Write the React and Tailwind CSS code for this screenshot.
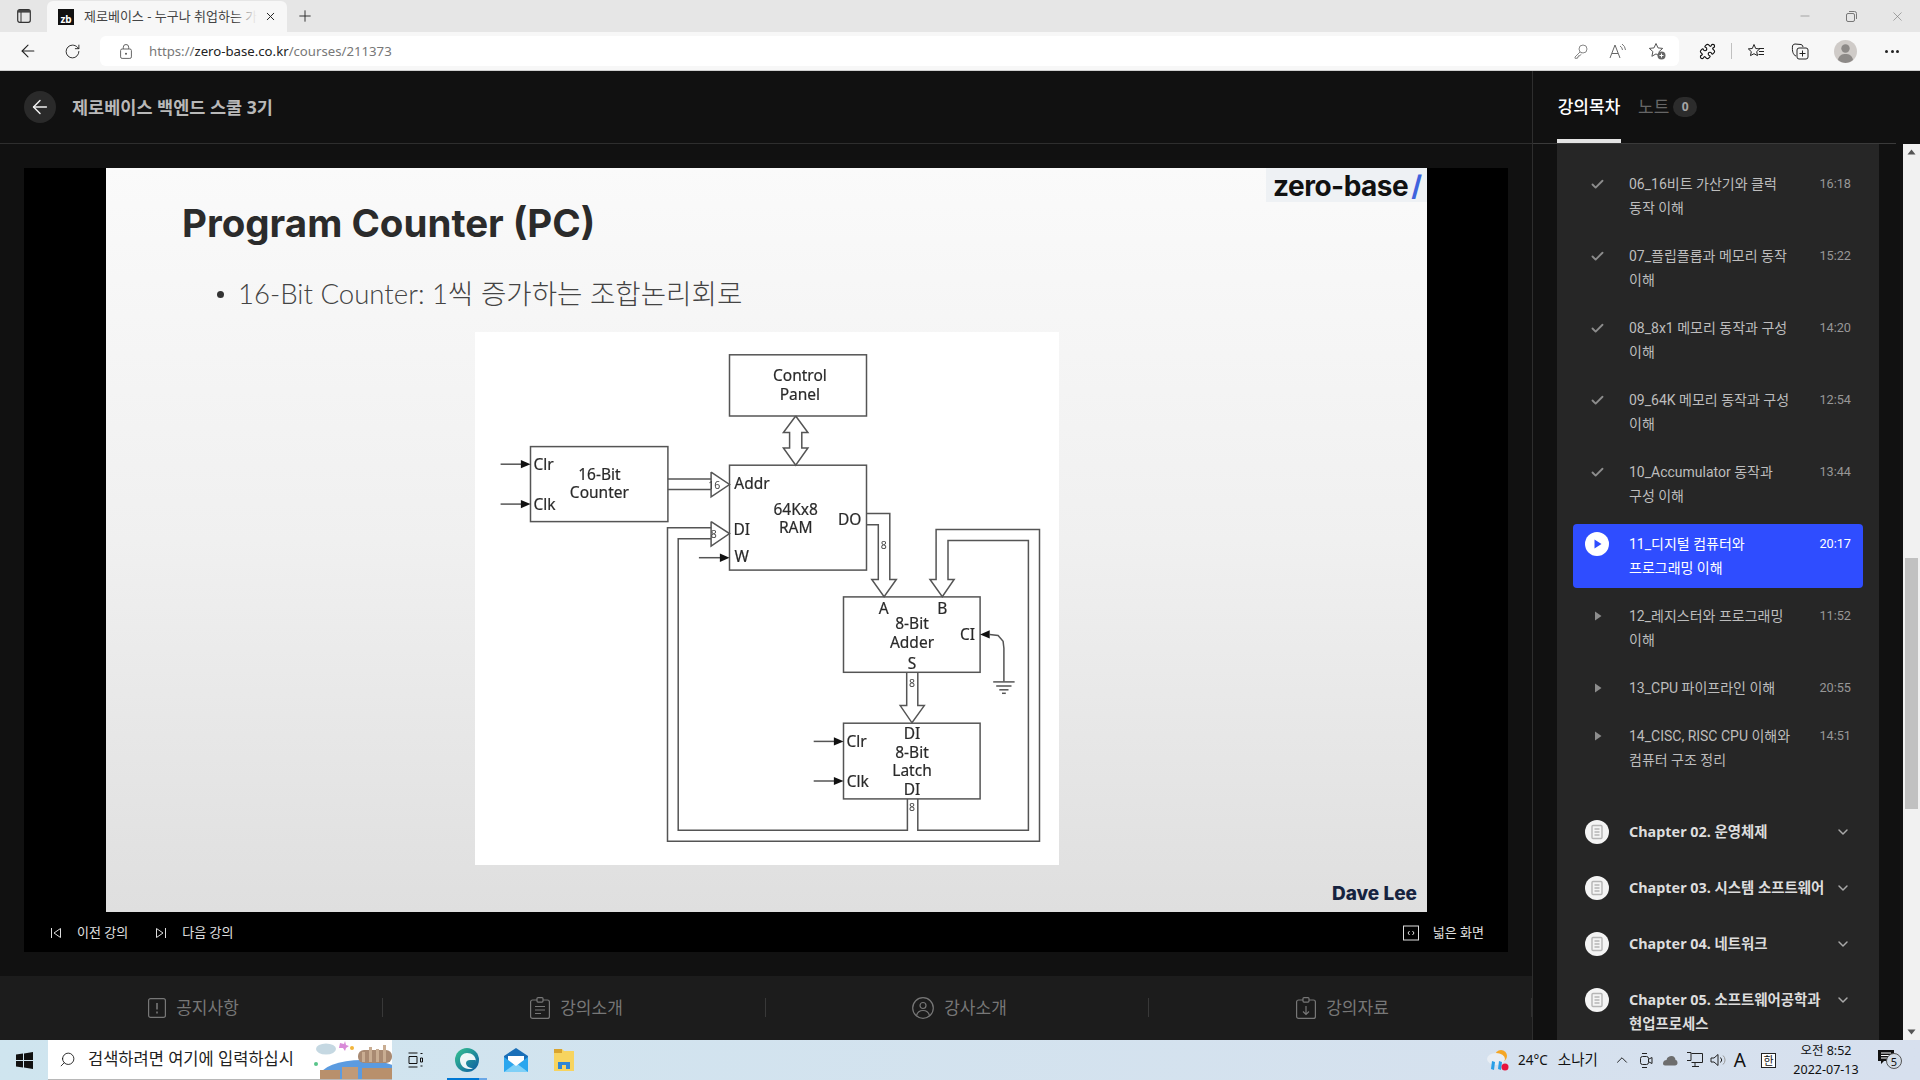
import React from "react";
import { ArrowLeft, RotateCw, Plus, X, Minus, Search, Check, ChevronDown, ChevronUp, Puzzle } from "lucide-react";

const FONT = { fontFamily: '"Noto Sans","Noto Sans CJK KR",sans-serif' };
const LIST_FONT = { fontFamily: 'Roboto,"Noto Sans CJK KR",sans-serif' };
const X_ = (x) => +(x * 0.3827 - 5).toFixed(1);
const Y_ = (y) => +(y * 0.344 - 2).toFixed(1);
const P = (pts) => pts.map(([x, y]) => `${X_(x)},${Y_(y)}`).join(" ");

const lessons = [
  ["06_16비트 가산기와 클럭", "동작 이해", "16:18", "done"],
  ["07_플립플롭과 메모리 동작", "이해", "15:22", "done"],
  ["08_8x1 메모리 동작과 구성", "이해", "14:20", "done"],
  ["09_64K 메모리 동작과 구성", "이해", "12:54", "done"],
  ["10_Accumulator 동작과", "구성 이해", "13:44", "done"],
  ["11_디지털 컴퓨터와", "프로그래밍 이해", "20:17", "active"],
  ["12_레지스터와 프로그래밍", "이해", "11:52", "todo"],
  ["13_CPU 파이프라인 이해", null, "20:55", "todo"],
  ["14_CISC, RISC CPU 이해와", "컴퓨터 구조 정리", "14:51", "todo"],
];
const chapters = [
  ["Chapter 02. 운영체제"],
  ["Chapter 03. 시스템 소프트웨어"],
  ["Chapter 04. 네트워크"],
  ["Chapter 05. 소프트웨어공학과", "현업프로세스"],
];

function Diagram() {
  const rects = [[678, 72, 1036, 250], [158, 339, 517, 557], [678, 393, 1036, 698], [976, 776, 1333, 995], [976, 1143, 1333, 1363]];
  const lines = [
    [[851, 250], [883, 298], [867, 298], [867, 343], [883, 343], [851, 393], [819, 343], [835, 343], [835, 298], [819, 298], [851, 250]],
    [[517, 433], [630, 433]],
    [[517, 464], [630, 464]],
    [[630, 413], [678, 449], [630, 485], [630, 413]],
    [[630, 557], [678, 592], [630, 628], [630, 557]],
    [[630, 575], [516, 575], [516, 1486], [1488, 1486], [1488, 580], [1218, 580], [1218, 725], [1202, 725], [1234, 775], [1265, 725], [1249, 725], [1249, 612], [1459, 612], [1459, 1454], [1170, 1454], [1170, 1363]],
    [[1143, 1363], [1143, 1454], [544, 1454], [544, 607], [630, 607]],
    [[1036, 533], [1097, 533], [1097, 725], [1114, 725], [1082, 775], [1050, 725], [1067, 725], [1067, 566], [1036, 566]],
    [[1141, 995], [1141, 1092], [1124, 1092], [1155, 1142], [1187, 1092], [1170, 1092], [1170, 995]],
    [[80, 390], [135, 390]],
    [[80, 506], [135, 506]],
    [[598, 662], [655, 662]],
    [[898, 1196], [955, 1196]],
    [[898, 1311], [955, 1311]],
    [[1367, 1023], [1423, 1023]],
    [[1375, 1035], [1415, 1035]],
    [[1383, 1046], [1407, 1046]],
    [[1390, 1056], [1400, 1056]],
    [[1358, 885], [1380, 888], [1393, 905], [1395, 925], [1395, 1022]],
  ];
  const heads = [
    [[133, 378], [158, 390], [133, 402]],
    [[133, 494], [158, 506], [133, 518]],
    [[653, 650], [678, 662], [653, 674]],
    [[951, 1184], [976, 1196], [951, 1208]],
    [[951, 1299], [976, 1311], [951, 1323]],
    [[1358, 873], [1333, 885], [1358, 897]],
  ];
  const big = [
    ["Control", 862, 132], ["Panel", 862, 186], ["16-Bit", 338, 418], ["Counter", 338, 472], ["Clr", 192, 390], ["Clk", 195, 506],
    ["Addr", 737, 445], ["64Kx8", 851, 519], ["RAM", 851, 573], ["DI", 710, 577], ["W", 710, 656], ["DO", 992, 549],
    ["A", 1081, 808], ["B", 1234, 808], ["8-Bit", 1155, 852], ["Adder", 1155, 906], ["S", 1155, 968], ["CI", 1300, 885],
    ["DI", 1155, 1172], ["8-Bit", 1155, 1226], ["Latch", 1155, 1280], ["DI", 1155, 1334], ["Clr", 1010, 1196], ["Clk", 1013, 1311],
  ];
  const small = [["16", 638, 449], ["8", 637, 592], ["8", 1081, 625], ["8", 1155, 1027], ["8", 1155, 1387]];
  return (
    <svg width="584" height="533" viewBox="0 0 584 533" className="block blur-[0.35px]" style={FONT}>
      <rect width="584" height="533" fill="#ffffff" />
      {rects.map(([a, b, c, d], i) => (
        <rect key={i} x={X_(a)} y={Y_(b)} width={X_(c) - X_(a)} height={Y_(d) - Y_(b)} fill="none" stroke="#555" strokeWidth="1.5" />
      ))}
      {lines.map((l, i) => (
        <polyline key={i} points={P(l)} fill="none" stroke="#555" strokeWidth="1.5" />
      ))}
      {heads.map((l, i) => (
        <polygon key={i} points={P(l)} fill="#111" />
      ))}
      {big.map(([t, x, y], i) => (
        <text key={i} x={X_(x)} y={Y_(y)} fontSize="15.5" fill="#2a2a2a" stroke="#2a2a2a" strokeWidth="0.2" textAnchor="middle" dominantBaseline="central">{t}</text>
      ))}
      {small.map(([t, x, y], i) => (
        <text key={i} x={X_(x)} y={Y_(y)} fontSize="10.5" fill="#444" textAnchor="middle" dominantBaseline="central">{t}</text>
      ))}
    </svg>
  );
}

function DocCircle() {
  return (
    <svg width="24" height="24" viewBox="0 0 24 24" className="shrink-0">
      <circle cx="12" cy="12" r="12" fill="#f4f4f4" />
      <rect x="7" y="5.500" width="10" height="13" rx="1" fill="none" stroke="#b5b5b5" strokeWidth="1.4" />
      <path d="M9.500 9h5M9.500 12h5M9.500 15h5" stroke="#b5b5b5" strokeWidth="1.3" />
    </svg>
  );
}

function LessonRow({ l1, l2, time, state }) {
  const active = state === "active";
  return (
    <div className={`mx-4 mb-2 flex w-[290px] rounded py-2 pl-3 pr-3 text-[14px] leading-6 ${active ? "bg-[#2f4dff] text-white" : "text-[#bdbdbd]"}`} style={LIST_FONT}>
      <div className="flex h-6 w-6 shrink-0 items-center justify-center">
        {state === "done" && <Check size={15} strokeWidth={3} color="#8c8c8c" />}
        {state === "todo" && (
          <svg width="8" height="10" viewBox="0 0 8 10" className="ml-[1px]"><path d="M1 0.500 L7.500 5 L1 9.500 Z" fill="#8c8c8c" /></svg>
        )}
        {active && (
          <svg width="24" height="24" viewBox="0 0 24 24"><circle cx="12" cy="12" r="12" fill="#fff" /><path d="M9.500 7.500 L16.500 12 L9.500 16.500 Z" fill="#2f4dff" /></svg>
        )}
      </div>
      <div className="ml-5 w-[162px] shrink-0 whitespace-nowrap">
        <div>{l1}</div>
        {l2 && <div>{l2}</div>}
      </div>
      <div className={`ml-auto text-[12.7px] leading-6 ${active ? "text-white" : "text-[#979797]"}`}>{time}</div>
    </div>
  );
}

function ChapterRow({ lines }) {
  return (
    <div className="mx-4 flex w-[290px] py-4 pl-3 pr-3 text-[14.4px] font-bold leading-6 text-[#dddddd]">
      <DocCircle />
      <div className="ml-5 w-[200px] shrink-0 whitespace-nowrap">
        {lines.map((t) => <div key={t}>{t}</div>)}
      </div>
      <div className="ml-auto flex h-6 w-4 items-center justify-center">
        <ChevronDown size={16} strokeWidth={2.2} color="#a8a8a8" />
      </div>
    </div>
  );
}

function BottomTab({ icon, label, last }) {
  return (
    <div className="relative flex h-full flex-1 items-center justify-center gap-[10px] pl-[4px] text-[17px] text-[#777777]">
      {icon}
      <span>{label}</span>
      <span className={`absolute right-0 top-[22px] h-[19px] w-px ${last ? "bg-[#2f2f2f]" : "bg-[#383838]"}`} />
    </div>
  );
}

const ic = { fill: "none", stroke: "#777", strokeWidth: 1.2 };

export default function App() {
  return (
    <div className="flex h-[1080px] w-[1920px] flex-col overflow-hidden bg-[#111111]" style={FONT}>
      {/* tab strip */}
      <div className="flex h-8 shrink-0 items-end bg-[#e6e6e6]">
        <div className="flex h-full w-[47px] items-center justify-center">
          <svg width="14" height="14" viewBox="0 0 14 14"><rect x="0.700" y="0.700" width="12.600" height="12.600" rx="2" fill="none" stroke="#333" strokeWidth="1.2" /><rect x="1" y="1" width="12" height="2.600" fill="#444" /><path d="M4 3v10" stroke="#333" /></svg>
        </div>
        <div className="flex h-[31px] w-[240px] items-center rounded-t-md bg-[#f7f7f7] pl-[11px]">
          <div className="flex h-4 w-4 items-end justify-center bg-[#111] text-[10px] font-bold leading-[11px] text-white">zb</div>
          <div className="relative ml-[10px] w-[173px] overflow-hidden whitespace-nowrap text-[13px] text-[#444]">
            제로베이스 - 누구나 취업하는 가
            <span className="absolute right-0 top-0 h-full w-6 bg-gradient-to-r from-transparent to-[#f7f7f7]" />
          </div>
          <X size={13} className="ml-[7px]" color="#222" strokeWidth={1.8} />
        </div>
        <div className="flex h-full w-9 items-center justify-center"><Plus size={18} strokeWidth={1.2} color="#222" /></div>
        <div className="ml-auto flex h-full items-center">
          <div className="flex w-[46px] justify-center"><Minus size={14} strokeWidth={1} color="#777" /></div>
          <div className="flex w-[46px] justify-center">
            <svg width="11" height="11" viewBox="0 0 11 11"><rect x="0.500" y="2.500" width="8" height="8" rx="1.500" fill="none" stroke="#777" /><path d="M3 0.500h5.500a2 2 0 0 1 2 2V8" fill="none" stroke="#777" /></svg>
          </div>
          <div className="flex w-[46px] justify-center"><X size={15} strokeWidth={1} color="#777" /></div>
        </div>
      </div>
      {/* toolbar */}
      <div className="flex h-[39px] shrink-0 items-center border-b border-[#cfcfcf] bg-[#f7f7f7]">
        <div className="flex w-[55px] justify-center"><ArrowLeft size={20} strokeWidth={1.3} color="#222" /></div>
        <div className="flex w-[35px] justify-center"><RotateCw size={17} strokeWidth={1.3} color="#222" /></div>
        <div className="ml-[10px] flex h-[30px] w-[1579px] items-center rounded-md bg-white">
          <svg width="12" height="15" viewBox="0 0 12 15" className="ml-[20px]"><rect x="0.600" y="5" width="10.800" height="9.400" rx="1.500" fill="none" stroke="#666" strokeWidth="1" /><path d="M3.300 5V3.200a2.700 2.700 0 0 1 5.400 0V5" fill="none" stroke="#666" /><circle cx="6" cy="9.700" r="1" fill="#555" /></svg>
          <div className="ml-[17px] pt-[1px] text-[13.2px] text-[#777]">https://<span className="text-[#222]">zero-base.co.kr</span>/courses/211373</div>
          <div className="ml-auto flex items-center gap-[22px] pr-[13px]">
            <svg width="14" height="15" viewBox="0 0 14 15" className="mr-[-1px]"><circle cx="9" cy="5" r="4" fill="none" stroke="#888" /><path d="M6 8 L1 13v1.300h2.400V13h1.300v-1.400h1.200L7.500 10" fill="none" stroke="#888" /></svg>
            <svg width="18" height="16" viewBox="0 0 18 16" className="mr-[-1px]"><path d="M1 15 L6 2 L11 15M3 10.500h6" fill="none" stroke="#666" /><path d="M11 3a5 5 0 0 1 2.500 4M13 1a8 8 0 0 1 3.500 6" fill="none" stroke="#777" /></svg>
            <svg width="18" height="18" viewBox="0 0 18 18"><path d="M8 1.500l2 4.400 4.700.5-3.600 3.200 1 4.700L8 11.900 3.900 14.300l1-4.700L1.300 6.400 6 5.900z" fill="none" stroke="#555" /><circle cx="13.500" cy="13.500" r="4" fill="#666" /><path d="M13.500 11.500v4M11.500 13.500h4" stroke="#fff" /></svg>
          </div>
        </div>
        <div className="ml-[17px] flex w-[22px] justify-center"><Puzzle size={17} strokeWidth={1.6} color="#111" /></div>
        <div className="ml-[13px] h-4 w-px bg-[#c0c0c0]" />
        <div className="ml-[15px]">
          <svg width="18" height="17" viewBox="0 0 18 17"><path d="M7 1.500l1.700 4 4 .4-3 2.700.8 4L7 10.700 3.500 12.600l.8-4-3-2.700 4-.4z" fill="none" stroke="#222" /><path d="M12 5.500h5M12 8.500h5M11.500 11.500h5.500" stroke="#222" /></svg>
        </div>
        <div className="ml-[26px]">
          <svg width="18" height="18" viewBox="0 0 18 18"><path d="M5 14 C2 13 1 9 1.500 4 Q2 2 4 2 l6 .5 Q12 3 12 5" fill="none" stroke="#222" /><rect x="6" y="6" width="11" height="11" rx="2" fill="none" stroke="#222" /><path d="M11.500 8.500v6M8.500 11.500h6" stroke="#222" /></svg>
        </div>
        <div className="ml-[25px] flex h-[23px] w-[23px] items-center justify-center rounded-full bg-[#cfcbc8]">
          <svg width="23" height="23" viewBox="0 0 23 23"><circle cx="11.500" cy="8.500" r="4.200" fill="#8d8a88" /><path d="M4 20c1-5 4-6 7.500-6s6.500 1 7.500 6a11 11 0 0 1-15 0z" fill="#8d8a88" /></svg>
        </div>
        <div className="ml-[28px] flex gap-[2.5px]">
          <span className="h-[3px] w-[3px] rounded-full bg-[#222]" /><span className="h-[3px] w-[3px] rounded-full bg-[#222]" /><span className="h-[3px] w-[3px] rounded-full bg-[#222]" />
        </div>
      </div>
      {/* main */}
      <div className="flex h-[969px] shrink-0">
        <div className="flex h-full w-[1533px] shrink-0 flex-col border-r border-[#2e2e2e]">
          <div className="flex h-[73px] shrink-0 items-center border-b border-[#2e2e2e] pl-6">
            <div className="flex h-8 w-8 items-center justify-center rounded-full bg-[#2a2a2a]"><ArrowLeft size={22} strokeWidth={1.6} color="#f0f0f0" /></div>
            <div className="ml-4 text-[17.5px] font-bold text-[#b9b9b9]">제로베이스 백엔드 스쿨 3기</div>
          </div>
          <div className="mx-6 mt-6 h-[784px] w-[1484px] shrink-0 bg-black">
            <div className="relative ml-[82px] h-[744px] w-[1321px] overflow-hidden bg-gradient-to-b from-[#fafafa] via-[#f0f0f0] to-[#dfdfdf]">
              <div className="absolute right-0 top-0 flex h-[34px] w-[161px] items-center bg-[#eef1f4] pl-[7px] pt-[2px] text-[28px] font-bold tracking-[-0.5px] text-[#111]" style={{ fontFamily: "Inter,sans-serif" }}>
                zero-base<span className="ml-[3px] text-[#3e63dd]">/</span>
              </div>
              <div className="pl-[76px] pt-[33px] text-[38.5px] font-bold leading-[44px] text-[#2b2b2b]" style={{ fontFamily: "Inter,sans-serif" }}>Program Counter (PC)</div>
              <div className="mt-[29px] flex h-[40px] items-center pl-[111px] text-[27.6px] font-light text-[#444]" style={{ fontFamily: 'Lato,"Noto Sans CJK KR",sans-serif' }}>
                <span className="h-[7px] w-[7px] rounded-full bg-[#333]" />
                <span className="ml-[14px]">16-Bit Counter: 1씩 증가하는 조합논리회로</span>
              </div>
              <div className="ml-[369px] mt-[18px] w-[584px]"><Diagram /></div>
              <div className="absolute bottom-[4px] right-[10px] text-[19px] font-extrabold text-[#16233f]" style={{ fontFamily: "Inter,sans-serif" }}>Dave Lee</div>
            </div>
            <div className="flex h-10 items-center pl-[26px] pr-6 pt-[2px] text-[13px] text-[#e0e0e0]">
              <svg width="12" height="12" viewBox="0 0 12 12"><path d="M1.500 1v10" stroke="#ddd" /><path d="M10.500 1.500 L4 6 L10.500 10.500 Z" fill="none" stroke="#ddd" /></svg>
              <span className="ml-[15px]">이전 강의</span>
              <svg width="12" height="12" viewBox="0 0 12 12" className="ml-[27px]"><path d="M10.500 1v10" stroke="#ddd" /><path d="M1.500 1.500 L8 6 L1.500 10.500 Z" fill="none" stroke="#ddd" /></svg>
              <span className="ml-[15px]">다음 강의</span>
              <svg width="16" height="16" viewBox="0 0 16 16" className="ml-auto"><rect x="0.500" y="1" width="15" height="14" fill="none" stroke="#ddd" /><path d="M6.500 6 L5 8 L6.500 10M9.500 6 L11 8 L9.500 10" fill="none" stroke="#ddd" /></svg>
              <span className="ml-[14px]">넓은 화면</span>
            </div>
          </div>
          <div className="mt-6 flex h-16 w-[1532px] shrink-0 bg-[#1c1c1c]">
            <BottomTab label="공지사항" icon={<svg width="18" height="20" viewBox="0 0 18 20"><rect x="0.600" y="0.600" width="16.800" height="18.800" rx="2" {...ic} /><path d="M9 5v6.500M9 13.500v2" {...ic} strokeWidth="1.6" /></svg>} />
            <BottomTab label="강의소개" icon={<svg width="20" height="22" viewBox="0 0 20 22"><rect x="0.600" y="3" width="18.800" height="18.400" rx="2" {...ic} /><rect x="7" y="0.600" width="6" height="4.500" rx="1" {...ic} fill="#1c1c1c" /><path d="M5 9.500h10M5 13h10M5 16.500h6" {...ic} /></svg>} />
            <BottomTab label="강사소개" icon={<svg width="22" height="22" viewBox="0 0 22 22"><circle cx="11" cy="11" r="10.300" {...ic} /><circle cx="11" cy="8.500" r="3" {...ic} /><path d="M4.500 18.500c1-3.500 3.500-5 6.500-5s5.500 1.500 6.500 5" {...ic} /></svg>} />
            <BottomTab label="강의자료" last icon={<svg width="20" height="22" viewBox="0 0 20 22"><rect x="0.600" y="3" width="18.800" height="18.400" rx="2" {...ic} /><rect x="7" y="0.600" width="6" height="4.500" rx="1" {...ic} fill="#1c1c1c" /><path d="M10 9v8M7 14.500l3 3 3-3" {...ic} /></svg>} />
          </div>
        </div>
        {/* sidebar */}
        <div className="flex h-full w-[387px] shrink-0 flex-col">
          <div className="flex h-[73px] w-[363px] shrink-0 items-start border-b border-[#3a3a3a] pl-6">
            <div className="flex h-[72px] w-16 items-center justify-center whitespace-nowrap border-b-4 border-[#e4e4e4] pt-[4px] text-[17px] font-medium text-white">강의목차</div>
            <div className="ml-[17px] flex h-[72px] items-center text-[17px] text-[#666666]">노트
              <span className="ml-[4px] flex h-5 w-6 items-center justify-center rounded-full bg-[#2c2c2c] text-xs font-bold text-[#a5a5a5]">0</span>
            </div>
          </div>
          <div className="flex min-h-0 flex-1">
            <div className="ml-6 h-full w-[322px] shrink-0 overflow-hidden bg-[#262626] pt-5">
              {lessons.map(([a, b, t, s]) => <LessonRow key={a} l1={a} l2={b} time={t} state={s} />)}
              <div className="h-4" />
              {chapters.map((c) => <ChapterRow key={c[0]} lines={c} />)}
            </div>
            <div className="ml-[24px] flex h-full w-[17px] shrink-0 flex-col items-center bg-[#f1f1f1]">
              <svg width="9" height="6" viewBox="0 0 9 6" className="mt-[5px]"><path d="M0.500 5.500 L4.500 0.500 L8.500 5.500 Z" fill="#555" /></svg>
              <div className="mt-[403px] h-[251px] w-[13px] bg-[#c1c1c1]" />
              <svg width="9" height="6" viewBox="0 0 9 6" className="mt-auto mb-[5px]"><path d="M0.500 0.500 L4.500 5.500 L8.500 0.500 Z" fill="#555" /></svg>
            </div>
          </div>
        </div>
      </div>
      {/* taskbar */}
      <div className="flex h-10 shrink-0 items-center bg-gradient-to-r from-[#cfe5ef] to-[#d7e0ee] text-[#111]">
        <div className="flex w-12 justify-center">
          <svg width="17" height="17" viewBox="0 0 17 17" fill="#111"><path d="M0 2.500 7 1.500v6.500H0zM8 1.400 17 0v8H8zM0 9h7v6.500l-7-1zM8 9h9v8l-9-1.400z" /></svg>
        </div>
        <div className="relative flex h-full w-[344px] items-center overflow-hidden border-b border-[#b8b8b8] bg-white pl-[11px]">
          <Search size={17} strokeWidth={1.2} color="#111" className="-scale-x-100" />
          <span className="ml-[12px] text-[16.5px] text-[#222]">검색하려면 여기에 입력하십시</span>
          <svg width="80" height="40" viewBox="0 0 80 40" className="absolute right-0 top-0">
            <ellipse cx="50" cy="36" rx="42" ry="16" fill="#5b9be0" />
            <ellipse cx="14" cy="9" rx="10" ry="5.500" fill="#c5d8e2" />
            <path d="M28 3l4 1 1-3 1 4 3 1-3 2-1 3-2-3-4 0z" fill="#d98ad8" />
            <circle cx="40" cy="8" r="2" fill="#f3b53a" />
            <circle cx="4" cy="24" r="2" fill="#58c48a" />
            <rect x="46" y="10" width="34" height="13" rx="6" fill="#a98a72" />
            <path d="M50 12h3v10h-3zM57 7h3v15h-3zM64 9h3v13h-3zM71 5h3v17h-3z" fill="#c9ad92" />
            <rect x="8" y="30" width="20" height="10" fill="#b8906c" />
            <rect x="30" y="27" width="16" height="13" fill="#c09a78" />
            <rect x="50" y="28" width="30" height="12" fill="#b8906c" />
          </svg>
        </div>
        <div className="ml-[16px] flex w-4 justify-center">
          <svg width="16" height="16" viewBox="0 0 16 16" fill="none" stroke="#111"><path d="M0.500 1h9M0.500 15h9M1 4.500h8v7H1zM12.500 1.500h2M12.500 6h2v4h-2zM12.500 14h2" /></svg>
        </div>
        <div className="relative ml-[23px] flex h-full w-10 items-center justify-center">
          <svg width="26" height="26" viewBox="0 0 26 26">
            <defs><linearGradient id="eg" x1="0" y1="0" x2="1" y2="1"><stop offset="0" stopColor="#37c58f" /><stop offset="1" stopColor="#0c59a4" /></linearGradient></defs>
            <circle cx="13" cy="13" r="12" fill="url(#eg)" />
            <path d="M22 15c0-6-4-9-9-9-4 0-7 3-7 7 0 5 4 9 9 9 1 0 3 0 4-1-4 0-7-2-7-5 0-2 2-3 4-3h6z" fill="#fff" opacity="0.92" />
          </svg>
          <span className="absolute bottom-0 left-0 h-[2px] w-8 bg-[#0078d4]" />
          <span className="absolute bottom-0 right-0 h-[2px] w-2 bg-[#6aa7e6]" />
        </div>
        <div className="ml-[17px]">
          <svg width="24" height="24" viewBox="0 0 24 24"><path d="M12 0 24 8v16H0V8z" fill="#1a6fb8" /><path d="M0 9 12 18 24 9v15H0z" fill="#2aa6ee" /><path d="M0 24 12 15l12 9z" fill="#7fd0f7" /><path d="M4 8h16v4l-8 6-8-6z" fill="#fff" /></svg>
        </div>
        <div className="ml-[25px]">
          <svg width="22" height="24" viewBox="0 0 22 24"><path d="M1 1h8l2 2h10v20H1z" fill="#f7d45f" /><path d="M1 1h8v4H1z" fill="#d9a42f" /><path d="M5 21v-7h12v7h-4v-4H9v4z" fill="#2e86d6" /></svg>
        </div>
        {/* tray */}
        <div className="ml-auto flex h-full items-center">
          <svg width="24" height="24" viewBox="0 0 24 24">
            <circle cx="15" cy="8" r="6" fill="#f5a623" />
            <ellipse cx="10" cy="11" rx="9" ry="6" fill="#e9eef4" />
            <path d="M6 13l-1 8 3 1 1-8zM13 13l-1 8 3 1 1-8z" fill="#2a9fe6" />
            <circle cx="19" cy="19" r="3.500" fill="#e8143c" />
          </svg>
          <span className="ml-[8px] text-[13.5px]">24°C</span>
          <span className="ml-[10px] text-[14.5px]">소나기</span>
          <ChevronUp size={18} strokeWidth={1.2} className="ml-[15px]" />
          <svg width="14" height="17" viewBox="0 0 14 17" fill="none" stroke="#222" className="ml-[8px]"><rect x="1.500" y="4.500" width="8" height="8" rx="2" /><path d="M10 7l3-1.500v6L10 10M3 1.500h5M3 15.500h5" /></svg>
          <svg width="16" height="11" viewBox="0 0 16 11" className="ml-[9px]"><path d="M1 8.500C1 6 3 5 4.500 5 5 2 7.500 1 9.500 1c2.500 0 4 2 4 4 1.500 0 2 1.500 2 3 0 1.500-1 2.500-2.500 2.500H3C1.800 10.500 1 9.500 1 8.500z" fill="#6d6d6d" /></svg>
          <svg width="17" height="16" viewBox="0 0 17 16" fill="none" stroke="#222" className="ml-[8px]"><path d="M5.500 1.500h11v9h-11M1 .500h4v8H1M9 10.500v3.500M6 14.500h7" /></svg>
          <svg width="16" height="14" viewBox="0 0 16 14" fill="none" stroke="#222" className="ml-[7px]"><path d="M1 5h3l4-3.500v11L4 9H1zM10.500 4.500a3.500 3.500 0 0 1 0 5" /><path d="M13 2.500a6 6 0 0 1 0 9" stroke="#999" /></svg>
          <span className="ml-[8px] text-[19px] leading-none">A</span>
          <span className="ml-[15px] flex h-[15px] w-[15px] items-center justify-center border border-[#222] bg-white text-[11px] leading-none">한</span>
          <div className="ml-[14px] flex w-[72px] flex-col items-center text-[12.5px] leading-[19px]">
            <span>오전 8:52</span>
            <span>2022-07-13</span>
          </div>
          <div className="relative ml-[16px] mr-[18px] h-6 w-[24px]">
            <svg width="16" height="15" viewBox="0 0 16 15" className="absolute left-0 top-[2px]"><path d="M0 0h16v11H6l-3 3v-3H0z" fill="#111" /><path d="M3 3h10M3 5.500h10M3 8h7" stroke="#fff" /></svg>
            <span className="absolute left-[8px] top-[5px] flex h-4 w-4 items-center justify-center rounded-full border border-[#555] bg-[#d3dde8] text-[11px] leading-none">5</span>
          </div>
        </div>
      </div>
    </div>
  );
}
